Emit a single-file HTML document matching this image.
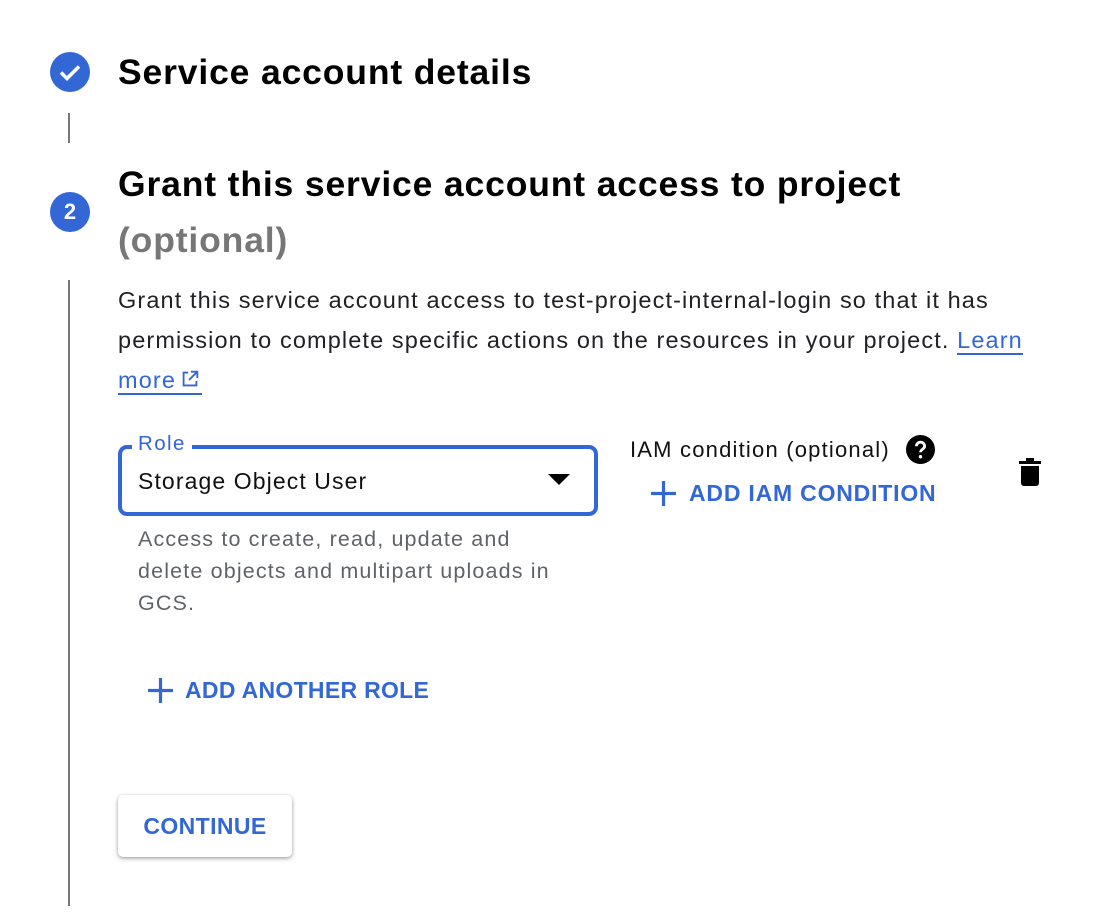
<!DOCTYPE html>
<html><head><meta charset="utf-8"><style>
*{margin:0;padding:0;box-sizing:border-box}
body{width:1096px;height:914px;background:#fff;font-family:"Liberation Sans",Arial,sans-serif;position:relative;overflow:hidden;color:#000}
.a{position:absolute;white-space:nowrap}
.circ{position:absolute;width:40px;height:40px;border-radius:50%;background:#3367d6;color:#fff;text-align:center;font-weight:bold}
.line{position:absolute;left:68px;width:2px;background:#777}
.h{font-size:35.5px;font-weight:bold;letter-spacing:0.85px}
.blue{color:#3367d6;font-weight:bold}
</style></head><body>
<div class="circ" style="left:50px;top:52px"><svg width="40" height="40" viewBox="0 0 40 40"><path d="M11 20.5l6 6 12-12" stroke="#fff" stroke-width="3.5" fill="none"/></svg></div>
<div class="a h" style="left:118px;top:50px;line-height:44px">Service account details</div>
<div class="line" style="top:113px;height:30px"></div>
<div class="circ" style="left:50px;top:192px;line-height:40px;font-size:22px">2</div>
<div class="a h" style="left:118px;top:156px;line-height:56px">Grant this service account access to project<br><span style="color:#777">(optional)</span></div>
<div class="line" style="top:280px;height:626px"></div>
<div class="a" style="left:118px;top:280px;font-size:23.5px;line-height:40px;color:#202124;letter-spacing:1.12px">Grant this service account access to test-project-internal-login so that it has<br>permission to complete specific actions on the resources in your project. <span style="color:#3367d6;border-bottom:2px solid #3367d6">Learn</span><br><span style="color:#3367d6;border-bottom:2px solid #3367d6">more<svg width="24" height="22" viewBox="0 0 24 24" style="vertical-align:-2px;margin-left:2px"><path d="M10 5H5v14h14v-5M13 4h7v7M20 4l-9 9" stroke="#3367d6" stroke-width="2" fill="none"/></svg></span></div>
<div class="a" style="left:118px;top:445px;width:480px;height:71px;border:4px solid #3367d6;border-radius:9px"></div>
<div class="a" style="left:132px;top:432px;background:#fff;padding:0 6px;color:#3367d6;font-size:20.5px;line-height:24px;letter-spacing:1.4px">Role</div>
<div class="a" style="left:138px;top:467px;font-size:23px;line-height:28px;color:#111;letter-spacing:1.1px">Storage Object User</div>
<svg class="a" style="left:548px;top:474px" width="22" height="12"><path d="M0 0h22L11 11z" fill="#000"/></svg>
<div class="a" style="left:138px;top:523px;font-size:21.5px;line-height:32px;color:#5f6368;letter-spacing:1.15px">Access to create, read, update and<br>delete objects and multipart uploads in<br>GCS.</div>
<div class="a" style="left:630px;top:436px;font-size:22px;line-height:28px;color:#111;letter-spacing:1.2px">IAM condition (optional)</div>
<svg class="a" style="left:906px;top:435px" width="29" height="29" viewBox="0 0 24 24"><circle cx="12" cy="12" r="12"/><path d="M8.6 9.3a3.4 3.4 0 0 1 6.8 0c0 2.3-3.4 2.6-3.4 5" stroke="#fff" stroke-width="2.3" fill="none"/><circle cx="12" cy="18" r="1.4" fill="#fff"/></svg>
<svg class="a" style="left:1018px;top:458px" width="24" height="28" viewBox="0 0 24 28"><rect x="1" y="3" width="22" height="3" fill="#000"/><rect x="8" y="0" width="8" height="4" fill="#000"/><path d="M3 8h18v17a3 3 0 0 1-3 3H6a3 3 0 0 1-3-3z" fill="#000"/></svg>
<svg class="a" style="left:651px;top:481px" width="25" height="25"><path d="M12.5 0v25M0 12.5h25" stroke="#3367d6" stroke-width="3.2"/></svg>
<div class="a blue" style="left:689px;top:479px;font-size:23px;line-height:28px;letter-spacing:0.8px">ADD IAM CONDITION</div>
<svg class="a" style="left:148px;top:678px" width="25" height="25"><path d="M12.5 0v25M0 12.5h25" stroke="#3367d6" stroke-width="3.2"/></svg>
<div class="a blue" style="left:185px;top:676px;font-size:23px;line-height:28px;letter-spacing:0.3px">ADD ANOTHER ROLE</div>
<div class="a blue" style="left:118px;top:795px;width:174px;height:62px;border-radius:5px;box-shadow:0 1px 3px rgba(0,0,0,.3),0 2px 6px rgba(0,0,0,.15);text-align:center;line-height:62px;font-size:23px;letter-spacing:0.4px">CONTINUE</div>
</body></html>
